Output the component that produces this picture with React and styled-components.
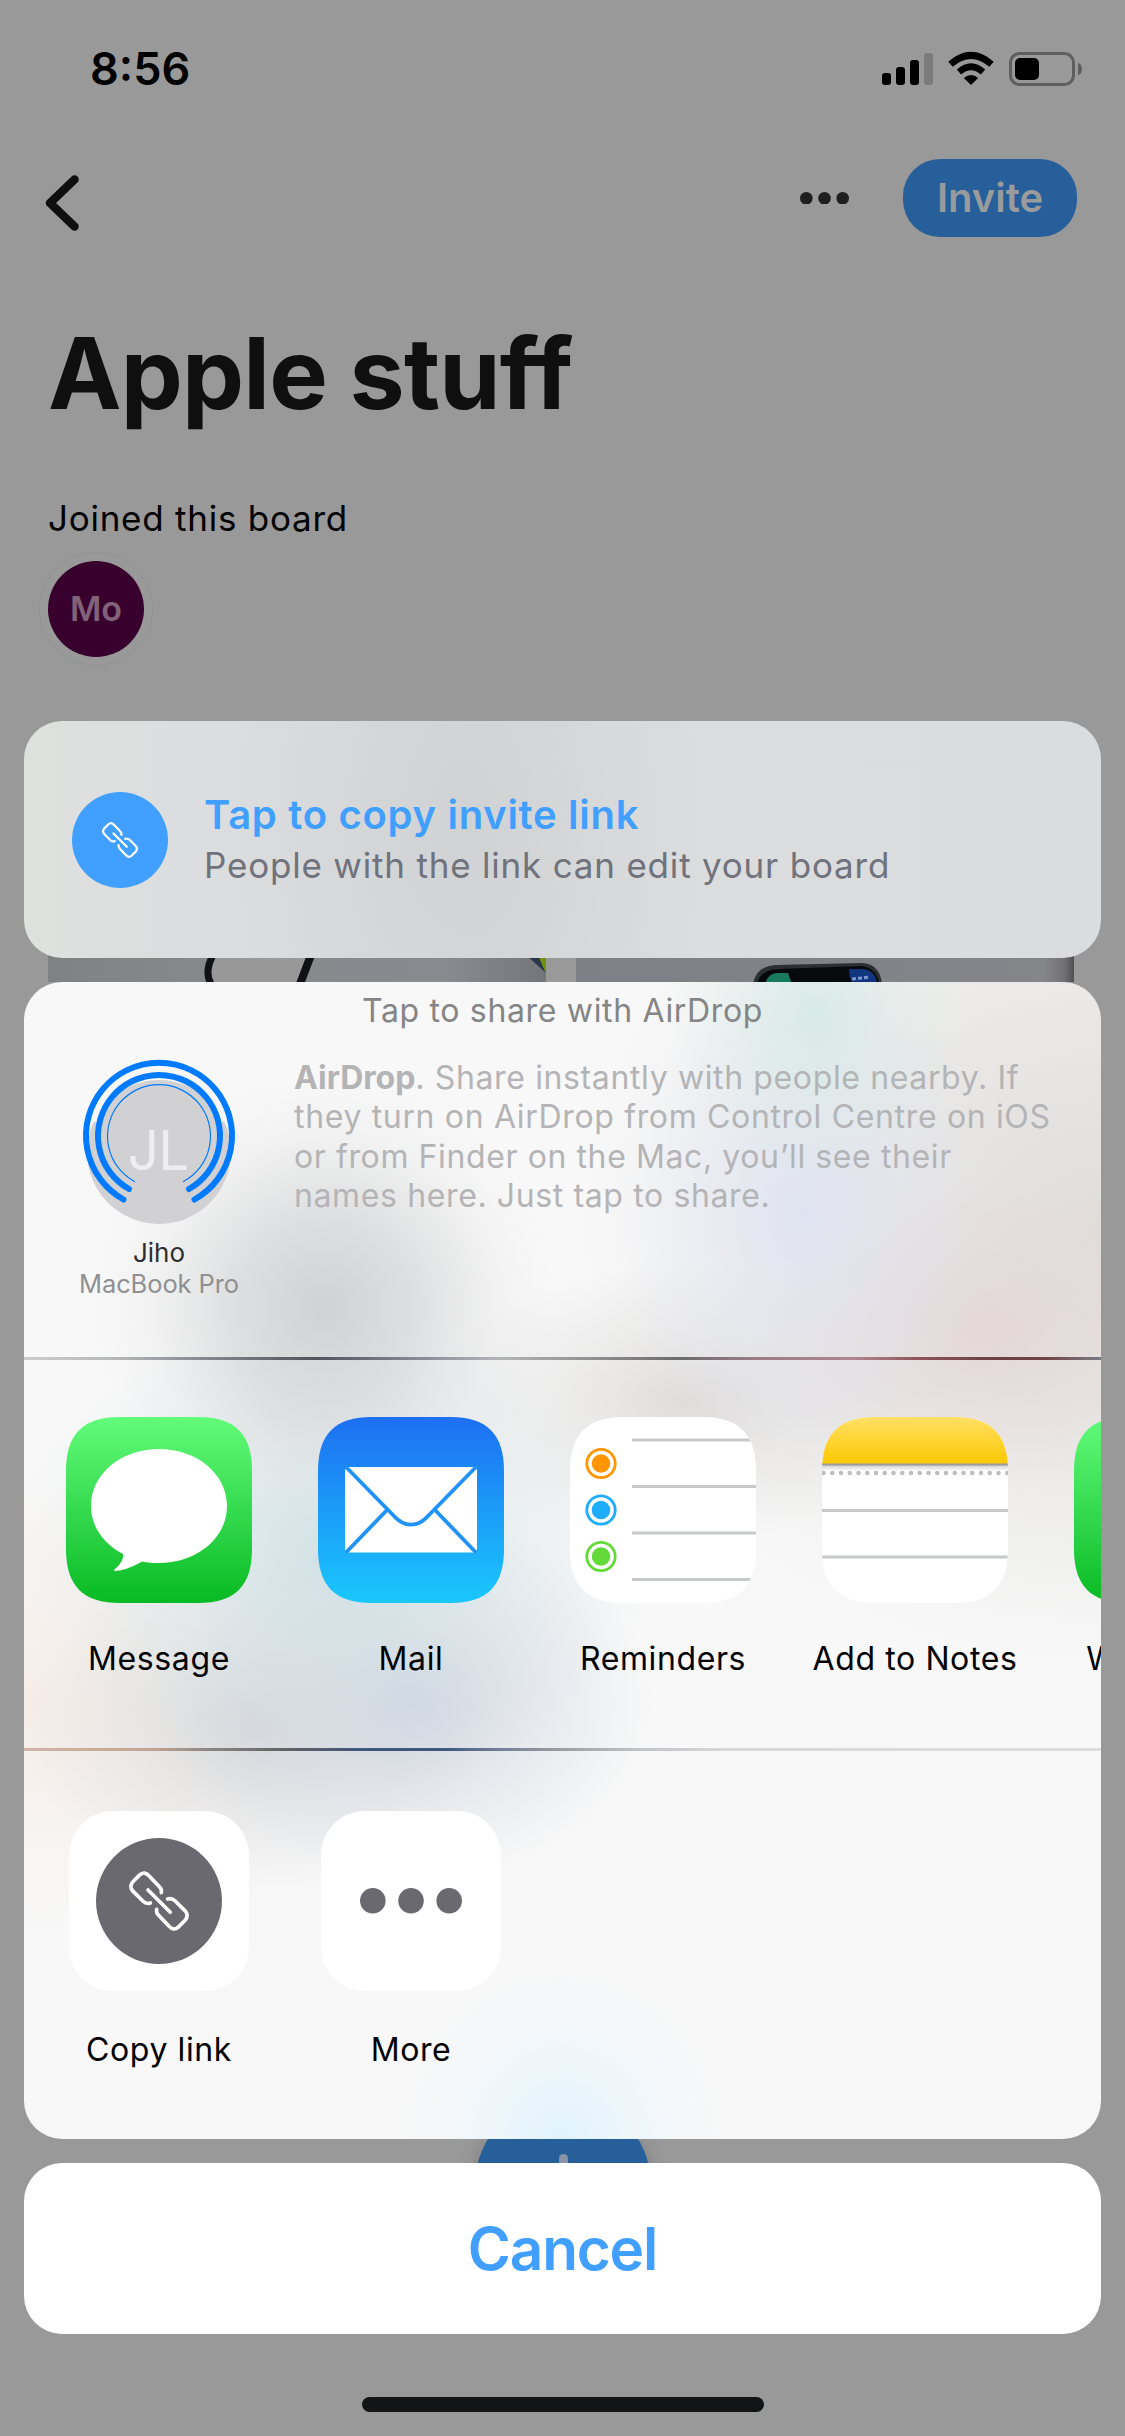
import React from "react";
import styled, { createGlobalStyle } from "styled-components";

const GlobalStyle = createGlobalStyle`
  *, *::before, *::after { box-sizing: border-box; }
  body { margin: 0; background: #999999; }
`;

const Screen = styled.div`
  position: relative;
  width: 1125px;
  height: 2436px;
  overflow: hidden;
  background: #999999;
  font-family: Inter, "Liberation Sans", sans-serif;
  color: #000;
`;

const Label = styled.span`
  display: block;
  margin: 0;
  white-space: nowrap;
  font-size: ${(p) => p.$size}px;
  font-weight: ${(p) => p.$weight || 400};
  line-height: ${(p) => p.$line}px;
  letter-spacing: ${(p) => p.$track || 0}px;
  color: ${(p) => p.$color || "#000"};
`;

/* ---------- Board behind the sheet ---------- */

const Board = styled.div`
  display: flex;
  flex-direction: column;
`;

const StatusBar = styled.div`
  height: 138px;
  padding: 0 42px 0 90px;
  display: flex;
  align-items: center;
  justify-content: space-between;
`;

const NavBar = styled.div`
  height: 120px;
  padding: 0 48px 0 44px;
  display: flex;
  align-items: center;
  justify-content: space-between;
`;

const NavActions = styled.div`
  display: flex;
  align-items: center;
  gap: 54px;
`;

const BackIcon = styled.svg`
  margin-top: 10px;
`;

const InviteButton = styled.button`
  width: 174px;
  height: 78px;
  padding: 0;
  border: 0;
  border-radius: 37px;
  background: #265f99;
  font-family: inherit;
  display: flex;
  align-items: center;
  justify-content: center;
`;

const BoardHead = styled.div`
  padding: 56px 48px 0;
  display: flex;
  flex-direction: column;
  align-items: flex-start;
`;

const Joined = styled.div`
  margin-top: 62px;
`;

const Avatar = styled.div`
  margin-top: 20px;
  width: 96px;
  height: 96px;
  border-radius: 50%;
  background: #38002c;
  box-shadow: 0 0 0 8px #999999, 0 0 0 9px #929595;
  display: flex;
  align-items: center;
  justify-content: center;
`;

const Thumbs = styled.div`
  margin-top: 93px;
  padding: 0 51px 0 48px;
  display: flex;
  justify-content: space-between;
`;

const Fab = styled.div`
  position: absolute;
  left: 475px;
  top: 2097px;
  width: 176px;
  height: 176px;
  border-radius: 50%;
  background: #265f99;
  box-shadow: 0 4px 20px rgba(0, 0, 0, 0.2);
  display: flex;
  justify-content: center;
  padding-top: 57px;
`;

const PlusStem = styled.div`
  width: 9px;
  height: 64px;
  border-radius: 5px;
  background: #8794a5;
`;

/* ---------- Share sheet ---------- */

const Overlay = styled.div`
  position: absolute;
  inset: 0;
  padding: 721px 24px 0;
  display: flex;
  flex-direction: column;
  gap: 24px;
`;

const LinkCard = styled.div`
  height: 237px;
  border-radius: 38px;
  padding-left: 48px;
  display: flex;
  align-items: center;
  gap: 36px;
  background:
    radial-gradient(240px 420px at 440px 100px, rgba(206, 207, 209, 0.8), rgba(206, 207, 209, 0) 100%),
    linear-gradient(90deg, #dfe1df 0%, #dcddde 14%, #dbdcdd 100%);
`;

const LinkBadge = styled.svg`
  flex: none;
`;

const LinkText = styled.div`
  padding-top: 1px;
`;

const Sheet = styled.div`
  height: 1157px;
  border-radius: 38px;
  overflow: hidden;
  display: flex;
  flex-direction: column;
  background:
    radial-gradient(230px 230px at 300px 325px, rgba(203, 205, 207, 0.9), rgba(206, 207, 209, 0.6) 40%, rgba(214, 215, 217, 0.18) 75%, rgba(220, 220, 222, 0) 100%),
    radial-gradient(150px 180px at 790px 30px, rgba(208, 233, 227, 0.75), rgba(214, 235, 230, 0.3) 55%, rgba(214, 235, 230, 0) 100%),
    radial-gradient(190px 240px at 780px 230px, rgba(219, 225, 244, 0.75), rgba(222, 227, 244, 0.35) 50%, rgba(222, 227, 244, 0) 100%),
    radial-gradient(240px 160px at 960px 350px, rgba(226, 208, 208, 0.65), rgba(226, 210, 210, 0.3) 55%, rgba(226, 210, 210, 0) 100%),
    radial-gradient(260px 140px at 660px 420px, rgba(216, 213, 212, 0.75), rgba(218, 216, 215, 0.35) 50%, rgba(220, 218, 217, 0) 100%),
    radial-gradient(520px 440px at 1077px 240px, rgba(220, 217, 214, 0.85), rgba(222, 220, 218, 0.55) 50%, rgba(224, 222, 220, 0) 100%),
    radial-gradient(320px 230px at 310px 570px, rgba(202, 222, 226, 0.85), rgba(208, 224, 228, 0.4) 50%, rgba(214, 226, 230, 0) 100%),
    radial-gradient(240px 180px at 390px 720px, rgba(203, 210, 223, 0.85), rgba(208, 214, 225, 0.45) 50%, rgba(214, 218, 226, 0) 100%),
    radial-gradient(230px 170px at 230px 745px, rgba(208, 210, 212, 0.8), rgba(212, 213, 215, 0.4) 50%, rgba(216, 217, 219, 0) 100%),
    radial-gradient(300px 230px at 10px 720px, rgba(246, 236, 229, 0.95), rgba(246, 238, 232, 0.5) 50%, rgba(246, 240, 236, 0) 100%),
    radial-gradient(160px 170px at 538px 1157px, rgba(224, 243, 254, 0.95), rgba(230, 244, 252, 0.5) 50%, rgba(236, 246, 252, 0) 100%),
    #f8f8f8;
`;

const SheetTitle = styled.div`
  display: flex;
  justify-content: center;
`;

const AirDropRow = styled.div`
  margin-top: 19px;
  height: 299px;
  padding-left: 42px;
  display: flex;
`;

const Contact = styled.div`
  width: 186px;
  margin-right: 42px;
  display: flex;
  flex-direction: column;
  align-items: center;
`;

const ContactName = styled.div`
  margin-top: 11px;
  display: flex;
  flex-direction: column;
  align-items: center;
`;

const Strong = styled.b`
  font-weight: 700;
  letter-spacing: 0;
`;

const Divider = styled.div`
  flex: none;
  height: 3px;
  background: ${(p) => p.$fill};
`;

const Shelf = styled.div`
  flex: none;
  height: 388px;
  padding: ${(p) => p.$top}px 0 0 42px;
  display: flex;
  gap: 66px;
`;

const Item = styled.div`
  flex: none;
  width: 186px;
  display: flex;
  flex-direction: column;
  align-items: center;
  gap: ${(p) => p.$gap}px;
`;

const ActionTile = styled.div`
  width: 180px;
  height: 180px;
  border-radius: 44px;
  background: #ffffff;
  display: flex;
  align-items: center;
  justify-content: center;
`;

const CancelButton = styled.button`
  height: 171px;
  padding: 0;
  border: 0;
  border-radius: 38px;
  background: #ffffff;
  font-family: inherit;
  display: flex;
  align-items: center;
  justify-content: center;
`;

const HomeIndicator = styled.div`
  align-self: center;
  margin-top: 39px;
  width: 402px;
  height: 15px;
  border-radius: 8px;
  background: #131415;
`;

/* ---------- Drawings ---------- */

const TILE =
  "M0 54 C0 17 17 0 54 0 L132 0 C169 0 186 17 186 54 L186 132 C186 169 169 186 132 186 L54 186 C17 186 0 169 0 132 Z";

const StatusIcons = () => (
  <svg width="201" height="36" viewBox="882 51 201 36">
    <rect x="882" y="73" width="9" height="12" rx="3" />
    <rect x="896" y="67" width="9" height="18" rx="3" />
    <rect x="910" y="60" width="9" height="25" rx="3" />
    <rect x="924" y="53" width="9" height="32" rx="3" fill="#7b7b7b" />
    <path d="M971 85 L963.8 78 Q971 72 978.2 78 Z" />
    <path d="M959 72 Q971 61.5 983 72" fill="none" stroke="#000" strokeWidth="6.6" />
    <path d="M950.5 64.2 Q971 46.5 991.5 64.2" fill="none" stroke="#000" strokeWidth="6.8" />
    <rect x="1010.5" y="53.5" width="63" height="31" rx="9" fill="none" stroke="#5f5f5f" strokeWidth="3" />
    <rect x="1015" y="58" width="24" height="22" rx="5" />
    <path d="M1078 62.5 Q1082 64.5 1082 69 Q1082 73.5 1078 75.5 Z" fill="#5f5f5f" />
  </svg>
);

const LinkGlyph = ({ size, fill, scale }) => (
  <LinkBadge width={size} height={size} viewBox="-190 -190 380 380">
    <circle r="190" fill={fill} />
    <g
      transform={`scale(${scale}) translate(-201 -201)`}
      fill="none"
      stroke="#fff"
      strokeWidth="11"
      strokeLinecap="round"
      strokeLinejoin="round"
    >
      <path d="M208 176 Q210 166 203 159 L172 126 Q157 109 142 123 L123 142 Q109 157 123 172 L153 202 Q162 211 175 207" />
      <path d="M194 226 Q192 236 199 243 L230 276 Q245 293 260 279 L279 260 Q293 245 279 230 L249 200 Q240 191 227 195" />
      <path d="M168 168 L235 235" />
    </g>
  </LinkBadge>
);

const LeftThumb = () => (
  <svg width="498" height="232" viewBox="48 750 498 232">
    <defs>
      <linearGradient id="wallLeft" x1="0" x2="1">
        <stop offset="0" stopColor="#808185" />
        <stop offset="0.3" stopColor="#87888b" />
        <stop offset="0.8" stopColor="#888a8f" />
        <stop offset="1" stopColor="#74767b" />
      </linearGradient>
    </defs>
    <rect x="48" y="750" width="498" height="232" fill="url(#wallLeft)" />
    <path d="M214 955 Q204 972 211 984 L300 984 L311 955 Z" fill="#989898" />
    <path d="M213 955 Q204 972 211 984" fill="none" stroke="#101114" strokeWidth="7" />
    <path d="M311 955 L300 984" stroke="#101114" strokeWidth="8" />
    <path d="M526 955 L546 973 L546 955 Z" fill="#29384a" />
    <path d="M538 955 L546 974 L546 955 Z" fill="#71920f" />
  </svg>
);

const RightThumb = () => (
  <svg width="498" height="232" viewBox="576 750 498 232">
    <defs>
      <linearGradient id="wallRight" x1="0" x2="1">
        <stop offset="0" stopColor="#7d8187" />
        <stop offset="0.5" stopColor="#808287" />
        <stop offset="0.94" stopColor="#85868a" />
        <stop offset="0.98" stopColor="#727176" />
        <stop offset="1" stopColor="#504f54" />
      </linearGradient>
    </defs>
    <rect x="576" y="750" width="498" height="232" fill="url(#wallRight)" />
    <path d="M753 984 Q756 966 776 965 L862 963 Q880 964 882 984 Z" fill="#2b3033" />
    <path d="M757 984 Q760 970 778 969 L862 966 Q877 968 879 984 Z" fill="#08090c" />
    <path d="M765 984 Q768 973 778 973 L788 973 L792 984 Z" fill="#177a5c" />
    <path d="M849 969 L864 969 Q876 971 877 984 L853 984 Q849 978 849 969 Z" fill="#123580" />
    <path d="M852 979 L870 977" stroke="#7b9ad0" strokeWidth="3" strokeDasharray="4 2" />
  </svg>
);

const AirDropAvatar = () => (
  <svg width="156" height="168" viewBox="81 1058 156 168">
    <circle cx="159" cy="1152" r="72" fill="#d1d1d4" />
    <path d="M95 1122 A66 66 0 0 1 223 1122" fill="none" stroke="#f6f6f6" strokeWidth="5" />
    <text
      x="158"
      y="1169.5"
      textAnchor="middle"
      fontFamily='Inter, "Liberation Sans", sans-serif'
      fontSize="55"
      fontWeight="400"
      letterSpacing="-1"
      fill="#eeeef0"
    >
      JL
    </text>
    <g fill="none" stroke="#007aff" strokeLinecap="round">
      <path d="M123.5 1199.5 A73 73 0 1 1 194.5 1199.5" strokeWidth="6" />
      <path d="M129 1189 A61 61 0 1 1 189 1189" strokeWidth="6" />
      <path d="M134.5 1181.5 A51.5 51.5 0 1 1 183.5 1181.5" strokeWidth="1.2" />
    </g>
  </svg>
);

const Gradient = ({ id, from, to }) => (
  <linearGradient id={id} x1="0" y1="0" x2="0" y2="1">
    <stop offset="0" stopColor={from} />
    <stop offset="1" stopColor={to} />
  </linearGradient>
);

const GreenTile = ({ id, children }) => (
  <svg width="186" height="186" viewBox="0 0 186 186">
    <defs>
      <Gradient id={id} from="#62fb7a" to="#08ba23" />
    </defs>
    <path d={TILE} fill={`url(#${id})`} />
    {children}
  </svg>
);

const MessageIcon = () => (
  <GreenTile id="msg">
    <path
      fill="#fff"
      d="M93 32 C131 32 161 57 161 89 C161 121 131 146 93 146 C87 146 81 145.500 76 144.500 C68 149 60 153 49 154 C47.500 154 48 152.500 49 152 C54 148 58 142 57 137 C38 127 25 110 25 89 C25 57 55 32 93 32 Z"
    />
  </GreenTile>
);

const MailIcon = () => (
  <svg width="186" height="186" viewBox="0 0 186 186">
    <defs>
      <Gradient id="mail" from="#1d6ff2" to="#1ac8fd" />
    </defs>
    <path d={TILE} fill="url(#mail)" />
    <rect x="27" y="50" width="132" height="85.500" rx="4" fill="#fff" />
    <g fill="none" stroke="#2093f8" strokeWidth="3.800">
      <path d="M28 50 L76 99 C86 110.500 100 110.500 110 99 L158 50" />
      <path d="M28 135.500 L69 93" />
      <path d="M158 135.500 L117 93" />
    </g>
  </svg>
);

const REMINDERS = [
  { y: 46.5, color: "#ff9500" },
  { y: 93, color: "#1eadf8" },
  { y: 139.5, color: "#63da38" },
];

const RemindersIcon = () => (
  <svg width="186" height="186" viewBox="0 0 186 186">
    <defs>
      <clipPath id="remClip">
        <path d={TILE} />
      </clipPath>
    </defs>
    <g clipPath="url(#remClip)">
      <rect width="186" height="186" fill="#fff" />
      {REMINDERS.map((r) => (
        <g key={r.color}>
          <circle cx="31" cy={r.y} r="14.2" fill="none" stroke={r.color} strokeWidth="2.800" />
          <circle cx="31" cy={r.y} r="9.300" fill={r.color} />
        </g>
      ))}
      {[23, 69.5, 116, 162.5].map((y) => (
        <rect key={y} x="62" y={y - 1.5} width="124" height="3" fill="#c6c8c9" />
      ))}
    </g>
  </svg>
);

const NotesIcon = () => (
  <svg width="186" height="186" viewBox="0 0 186 186">
    <defs>
      <clipPath id="notesClip">
        <path d={TILE} />
      </clipPath>
      <Gradient id="notes" from="#ffe066" to="#fcc800" />
      <Gradient id="notesShade" from="#c4c4c4" to="#ffffff" />
    </defs>
    <g clipPath="url(#notesClip)">
      <rect width="186" height="186" fill="#fff" />
      <rect width="186" height="47" fill="url(#notes)" />
      <rect y="47" width="186" height="7" fill="url(#notesShade)" />
      <rect y="46.500" width="186" height="2" fill="#9c9c9c" />
      <path d="M1.500 56 H188" stroke="#bdbec0" strokeWidth="4.600" strokeLinecap="round" strokeDasharray="0 8.750" />
      <rect y="92" width="186" height="3" fill="#c6c8c9" />
      <rect y="138.500" width="186" height="3" fill="#c6c8c9" />
    </g>
  </svg>
);

const Dots = ({ width, r, color }) => (
  <svg width={width} height={r * 2} viewBox={`0 0 ${width} ${r * 2}`} fill={color}>
    <circle cx={r} cy={r} r={r} />
    <circle cx={width / 2} cy={r} r={r} />
    <circle cx={width - r} cy={r} r={r} />
  </svg>
);

const APPS = [
  { name: "Message", icon: <MessageIcon /> },
  { name: "Mail", icon: <MailIcon /> },
  { name: "Reminders", icon: <RemindersIcon /> },
  { name: "Add to Notes", icon: <NotesIcon /> },
  { name: "WhatsApp", icon: <GreenTile id="wa" /> },
];

const LINE_ONE =
  "linear-gradient(90deg,#cbcbcd 0,#b9babd 8%,#8a8b93 16%,#52535b 27%,#8f929b 38%,#b3b5b9 44%,#929397 52%,#6c6b70 61%,#9c7c84 68%,#b0868d 77%,#8d555b 83%,#6b4045 90%,#704549 95%,#7c7c88 100%)";
const LINE_TWO =
  "linear-gradient(90deg,#cfb5a5 0,#c0a594 12%,#8f8784 17%,#646465 24%,#42557a 31%,#40587f 39%,#707f96 44%,#9d9fa3 50%,#c2c3c5 57%,#dadadb 66%,#dcdcdd 100%)";

export default function App() {
  return (
    <Screen>
      <GlobalStyle />
      <Board>
        <StatusBar>
          <Label $size={45} $weight={600} $line={54}>8:56</Label>
          <StatusIcons />
        </StatusBar>
        <NavBar>
          <BackIcon width="35" height="56" viewBox="0 0 35 56">
            <path d="M30.500 4.500 L6 28 L30.500 51.500" fill="none" stroke="#0f0f0f" strokeWidth="8.500" strokeLinecap="round" strokeLinejoin="round" />
          </BackIcon>
          <NavActions>
            <Dots width={49} r={6.3} color="#1f1f1f" />
            <InviteButton>
              <Label $size={40} $weight={600} $line={48} $color="#999b9d">Invite</Label>
            </InviteButton>
          </NavActions>
        </NavBar>
        <BoardHead>
          <Label as="h1" $size={98.5} $weight={700} $line={120} $track={-0.8} $color="#0f0f0f">Apple stuff</Label>
          <Joined>
            <Label $size={35} $line={45} $track={0.75}>Joined this board</Label>
          </Joined>
          <Avatar>
            <Label $size={34} $weight={600} $line={40} $color="#826278">Mo</Label>
          </Avatar>
        </BoardHead>
        <Thumbs>
          <LeftThumb />
          <RightThumb />
        </Thumbs>
      </Board>
      <Fab>
        <PlusStem />
      </Fab>

      <Overlay>
        <LinkCard>
          <LinkGlyph size={96} fill="#409fff" scale={0.79} />
          <LinkText>
            <Label $size={40} $weight={600} $line={50} $track={0.7} $color="#409fff">Tap to copy invite link</Label>
            <Label $size={35} $line={50} $track={0.8} $color="#70727c">People with the link can edit your board</Label>
          </LinkText>
        </LinkCard>

        <Sheet>
          <SheetTitle>
            <Label $size={32} $line={57} $track={0.67} $color="#858586">Tap to share with AirDrop</Label>
          </SheetTitle>
          <AirDropRow>
            <Contact>
              <AirDropAvatar />
              <ContactName>
                <Label $size={26} $line={31} $color="#2e2e30">Jiho</Label>
                <Label $size={25.5} $line={31.5} $track={-0.1} $color="#8f9091">MacBook Pro</Label>
              </ContactName>
            </Contact>
            <div>
              <Label $size={32} $line={39.4} $track={0.63} $color="#b4b4b6"><Strong>AirDrop</Strong>. Share instantly with people nearby. If</Label>
              <Label $size={32} $line={39.4} $track={0.66} $color="#b4b4b6">they turn on AirDrop from Control Centre on iOS</Label>
              <Label $size={32} $line={39.4} $track={0.6} $color="#b4b4b6">or from Finder on the Mac, you’ll see their</Label>
              <Label $size={32} $line={39.4} $track={0.62} $color="#b4b4b6">names here. Just tap to share.</Label>
            </div>
          </AirDropRow>
          <Divider $fill={LINE_ONE} />
          <Shelf $top={57}>
            {APPS.map((app) => (
              <Item key={app.name} $gap={33}>
                {app.icon}
                <Label $size={32} $line={45} $track={0.6}>{app.name}</Label>
              </Item>
            ))}
          </Shelf>
          <Divider $fill={LINE_TWO} />
          <Shelf $top={60}>
            <Item $gap={36}>
              <ActionTile>
                <LinkGlyph size={126} fill="#6a6970" scale={1} />
              </ActionTile>
              <Label $size={32} $line={45} $track={0.6}>Copy link</Label>
            </Item>
            <Item $gap={36}>
              <ActionTile>
                <Dots width={102} r={12.8} color="#6a6970" />
              </ActionTile>
              <Label $size={32} $line={45} $track={0.6}>More</Label>
            </Item>
          </Shelf>
        </Sheet>

        <CancelButton>
          <Label $size={58.5} $weight={600} $line={70} $track={-1.2} $color="#409fff">Cancel</Label>
        </CancelButton>
        <HomeIndicator />
      </Overlay>
    </Screen>
  );
}
